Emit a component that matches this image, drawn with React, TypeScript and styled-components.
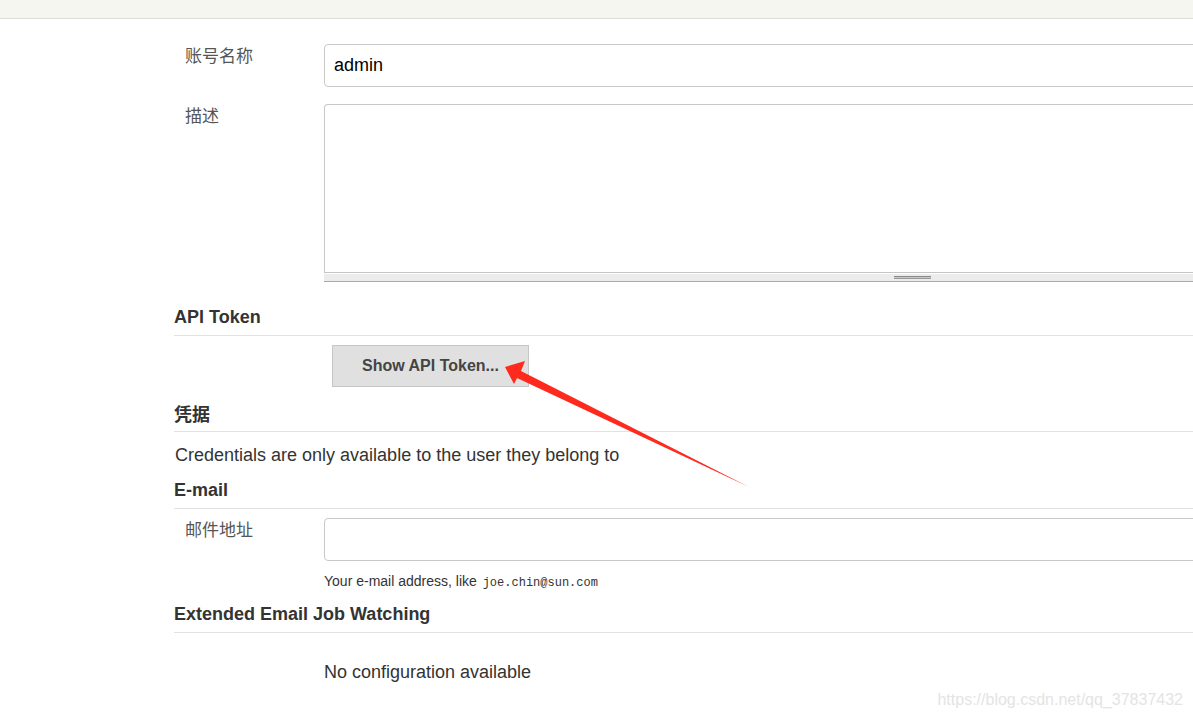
import React from "react";
import styled, { createGlobalStyle } from "styled-components";

const GlobalStyle = createGlobalStyle`
  html, body {
    margin: 0;
    padding: 0;
    background: #fff;
    overflow: hidden;
  }
  body {
    font-family: "Liberation Sans", Arial, "Noto Sans CJK SC", sans-serif;
    color: #333;
  }
`;

const Page = styled.div`
  position: relative;
  width: 1193px;
  height: 717px;
  overflow: hidden;
`;

const TopBar = styled.div`
  height: 18px;
  background: #f5f6f0;
  border-bottom: 1px solid #dcdcd6;
`;

const Form = styled.div`
  padding-left: 174px;
`;

const Row = styled.div<{ $top: number }>`
  display: grid;
  grid-template-columns: 150px 1176px;
  margin-top: ${(p) => p.$top}px;
`;

const Label = styled.div`
  padding-left: 11px;
  font-family: "Noto Sans CJK SC", "Liberation Serif", serif;
  font-size: 17px;
  line-height: 22px;
  color: #555;
`;

const TextInput = styled.div`
  box-sizing: border-box;
  height: 43px;
  border: 1px solid #c8c8c8;
  border-radius: 4px;
  padding: 0 9px;
  font-size: 18px;
  line-height: 41px;
  color: #000;
`;

const TextArea = styled.div`
  display: flex;
  flex-direction: column;
`;

const AreaBox = styled.div`
  box-sizing: border-box;
  height: 169px;
  border: 1px solid #c8c8c8;
  border-bottom-color: #c4c4c4;
  border-radius: 4px 4px 0 0;
`;

const ResizeBar = styled.div`
  box-sizing: border-box;
  margin-top: 1px;
  height: 8px;
  background: #ececec;
  border-bottom: 1px solid #aaa;
  display: flex;
  justify-content: center;
  align-items: flex-start;
  padding-top: 2px;
`;

const Grip = styled.div`
  width: 37px;
  height: 1px;
  border-top: 1px solid #8a8a8a;
  border-bottom: 1px solid #999;
  background: #c8c8c8;
`;

const SectionHeader = styled.div<{ $top: number; $cjk?: boolean }>`
  margin-top: ${(p) => p.$top}px;
  font-family: ${(p) =>
    p.$cjk
      ? `"Noto Sans CJK SC", "Liberation Serif", serif`
      : `"Liberation Sans", Arial, sans-serif`};
  font-weight: bold;
  font-size: 18px;
  line-height: 24px;
  padding-bottom: 6px;
  border-bottom: 1px solid #e2e2e2;
  color: #333;
`;

const ButtonRow = styled.div`
  margin-top: 9px;
  padding-left: 158px;
`;

const GreyButton = styled.div`
  box-sizing: border-box;
  width: 197px;
  height: 42px;
  background: #e0e0e0;
  border: 1px solid #c6c6c6;
  font-weight: bold;
  font-size: 16px;
  line-height: 40px;
  text-align: center;
  color: #444;
`;

const Paragraph = styled.div<{ $top: number; $indent?: number }>`
  margin-top: ${(p) => p.$top}px;
  padding-left: ${(p) => p.$indent ?? 1}px;
  font-size: 18px;
  line-height: 24px;
  color: #333;
`;

const Help = styled.div`
  margin-top: 11px;
  padding-left: 150px;
  font-size: 14px;
  line-height: 18px;
  color: #333;
`;

const Code = styled.code`
  font-family: "Liberation Mono", "Courier New", monospace;
  font-size: 12px;
  margin-left: 2px;
`;

const Watermark = styled.div`
  position: absolute;
  right: 10px;
  bottom: 8px;
  font-size: 16px;
  color: #e4e4e4;
`;

const Arrow = styled.svg`
  position: absolute;
  left: 0;
  top: 0;
  pointer-events: none;
`;

export default function App() {
  return (
    <>
      <GlobalStyle />
      <Page>
        <TopBar />
        <Form>
          <Row $top={25}>
            <Label>账号名称</Label>
            <TextInput>admin</TextInput>
          </Row>
          <Row $top={17}>
            <Label>描述</Label>
            <TextArea>
              <AreaBox />
              <ResizeBar>
                <Grip />
              </ResizeBar>
            </TextArea>
          </Row>

          <SectionHeader $top={23}>API Token</SectionHeader>
          <ButtonRow>
            <GreyButton>Show API Token...</GreyButton>
          </ButtonRow>

          <SectionHeader $top={14} $cjk>
            凭据
          </SectionHeader>
          <Paragraph $top={11}>
            Credentials are only available to the user they belong to
          </Paragraph>

          <SectionHeader $top={11}>E-mail</SectionHeader>
          <Row $top={9}>
            <Label>邮件地址</Label>
            <TextInput />
          </Row>
          <Help>
            Your e-mail address, like <Code>joe.chin@sun.com</Code>
          </Help>

          <SectionHeader $top={10}>Extended Email Job Watching</SectionHeader>
          <Paragraph $top={27} $indent={150}>
            No configuration available
          </Paragraph>
        </Form>

        <Arrow width="1193" height="717" viewBox="0 0 1193 717">
          <polygon
            points="505,367 525,361 521,371 749,487 517,378 514,384"
            fill="#ff2a1e"
          />
        </Arrow>
        <Watermark>https://blog.csdn.net/qq_37837432</Watermark>
      </Page>
    </>
  );
}
